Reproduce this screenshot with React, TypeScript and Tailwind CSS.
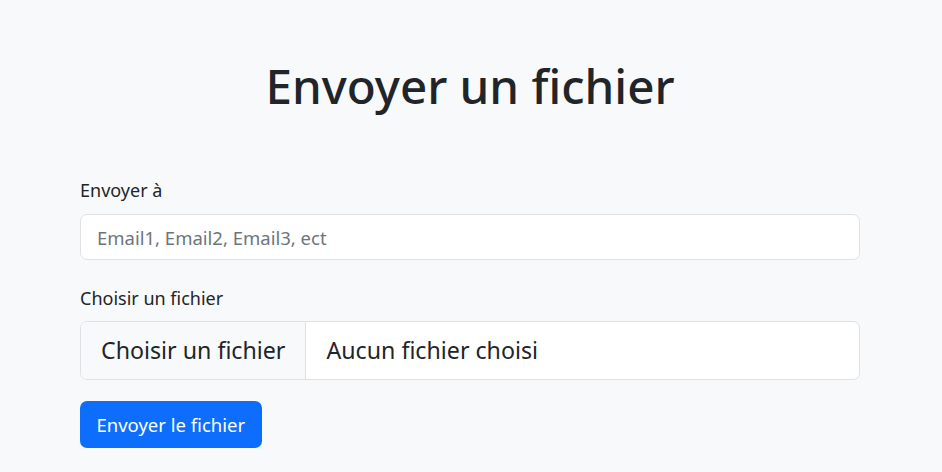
export default function App() {
  return (
    <div className="min-h-[472px] w-full bg-[#f8f9fa] text-[#212529] font-['Noto_Sans',sans-serif]">
      <div className="ml-[80px] w-[780px] pt-[57px]">
        <h1 className="text-center text-[47.5px] leading-[1.2] font-medium">Envoyer un fichier</h1>

        <form className="mt-[64px] flex flex-col" onSubmit={(e) => e.preventDefault()}>
          <label htmlFor="emails" className="h-[24px] leading-[24px] text-[18px] mb-[12px]">
            Envoyer à
          </label>
          <input
            id="emails"
            type="text"
            placeholder="Email1, Email2, Email3, ect"
            className="h-[46px] w-full rounded-[7px] border border-[#dee2e6] bg-white px-[16px] text-[18.5px] outline-none placeholder:text-[#6c757d]"
          />

          <label className="mt-[26px] h-[24px] leading-[24px] text-[18px] mb-[11px]">Choisir un fichier</label>
          <div className="flex h-[59px] w-full overflow-hidden rounded-[7px] border border-[#dee2e6] bg-white text-[23.2px]">
            <div className="flex items-center border-r border-[#dee2e6] bg-[#f8f9fa] px-[20px]">Choisir un fichier</div>
            <div className="flex items-center px-[20px]">Aucun fichier choisi</div>
          </div>

          <div className="mt-[21px]">
            <button
              type="submit"
              className="h-[47px] rounded-[7px] bg-[#0d6efd] px-[16.5px] text-[18.5px] text-white"
            >
              Envoyer le fichier
            </button>
          </div>
        </form>
      </div>
    </div>
  );
}
